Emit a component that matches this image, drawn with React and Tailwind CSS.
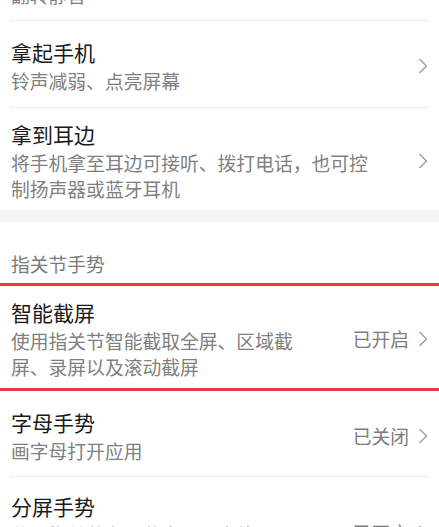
const font = { fontFamily: '"Noto Sans CJK SC", "Noto Sans", sans-serif' }

function Chevron() {
  return (
    <svg width="10" height="16" viewBox="0 0 10 16" className="shrink-0">
      <polyline points="2,1.5 8.5,8 2,14.5" fill="none" stroke="#a3a3a3" strokeWidth="1.6" strokeLinecap="round" strokeLinejoin="round" />
    </svg>
  )
}

function Row({ title, desc, status, pad }) {
  return (
    <div className={`flex items-center px-[11px] ${pad}`}>
      <div className="flex-1 min-w-0">
        <div className="text-[21px] leading-[28px] text-[#1a1a1a]">{title}</div>
        <div className="mt-[2px] text-[18.8px] leading-[26px] text-[#808080]">{desc}</div>
      </div>
      <div className="ml-[46px] flex items-center gap-[9px]">
        {status && <span className="text-[18.8px] leading-[26px] text-[#7c7c7c]">{status}</span>}
        <Chevron />
      </div>
    </div>
  )
}

function Divider() {
  return <div className="mx-[10px] h-px bg-[#ececec]" />
}

export default function App() {
  return (
    <div className="w-[439px] h-[527px] overflow-hidden bg-white" style={font}>
      {/* cut-off row above */}
      <div className="h-[20px] overflow-hidden flex flex-col justify-end pb-[12px] px-[11px]">
        <div className="text-[18.8px] leading-[26px] text-[#808080]">翻转静音</div>
      </div>
      <Divider />
      <Row title="拿起手机" desc="铃声减弱、点亮屏幕" pad="pt-[17px] pb-[13px]" />
      <Divider />
      <Row
        title="拿到耳边"
        desc="将手机拿至耳边可接听、拨打电话，也可控制扬声器或蓝牙耳机"
        pad="pt-[12px] pb-[8px]"
      />

      {/* section gap */}
      <div className="h-[12px] bg-[#f3f3f3]" />

      <div className="px-[11px] pt-[29px] pb-[6px] text-[18.8px] leading-[26px] text-[#7b7b7b]">
        指关节手势
      </div>

      <div className="border-y-[3px] border-[#e53a3c]">
        <Row
          title="智能截屏"
          desc="使用指关节智能截取全屏、区域截屏、录屏以及滚动截屏"
          status="已开启"
          pad="pt-[12px] pb-[8px]"
        />
      </div>
      <Row title="字母手势" desc="画字母打开应用" status="已关闭" pad="pt-[17px] pb-[12px]" />
      <Divider />
      <Row
        title="分屏手势"
        desc="使用指关节在屏幕中间画直线，可启动分屏"
        status="已开启"
        pad="pt-[15px] pb-[10px]"
      />
    </div>
  )
}
